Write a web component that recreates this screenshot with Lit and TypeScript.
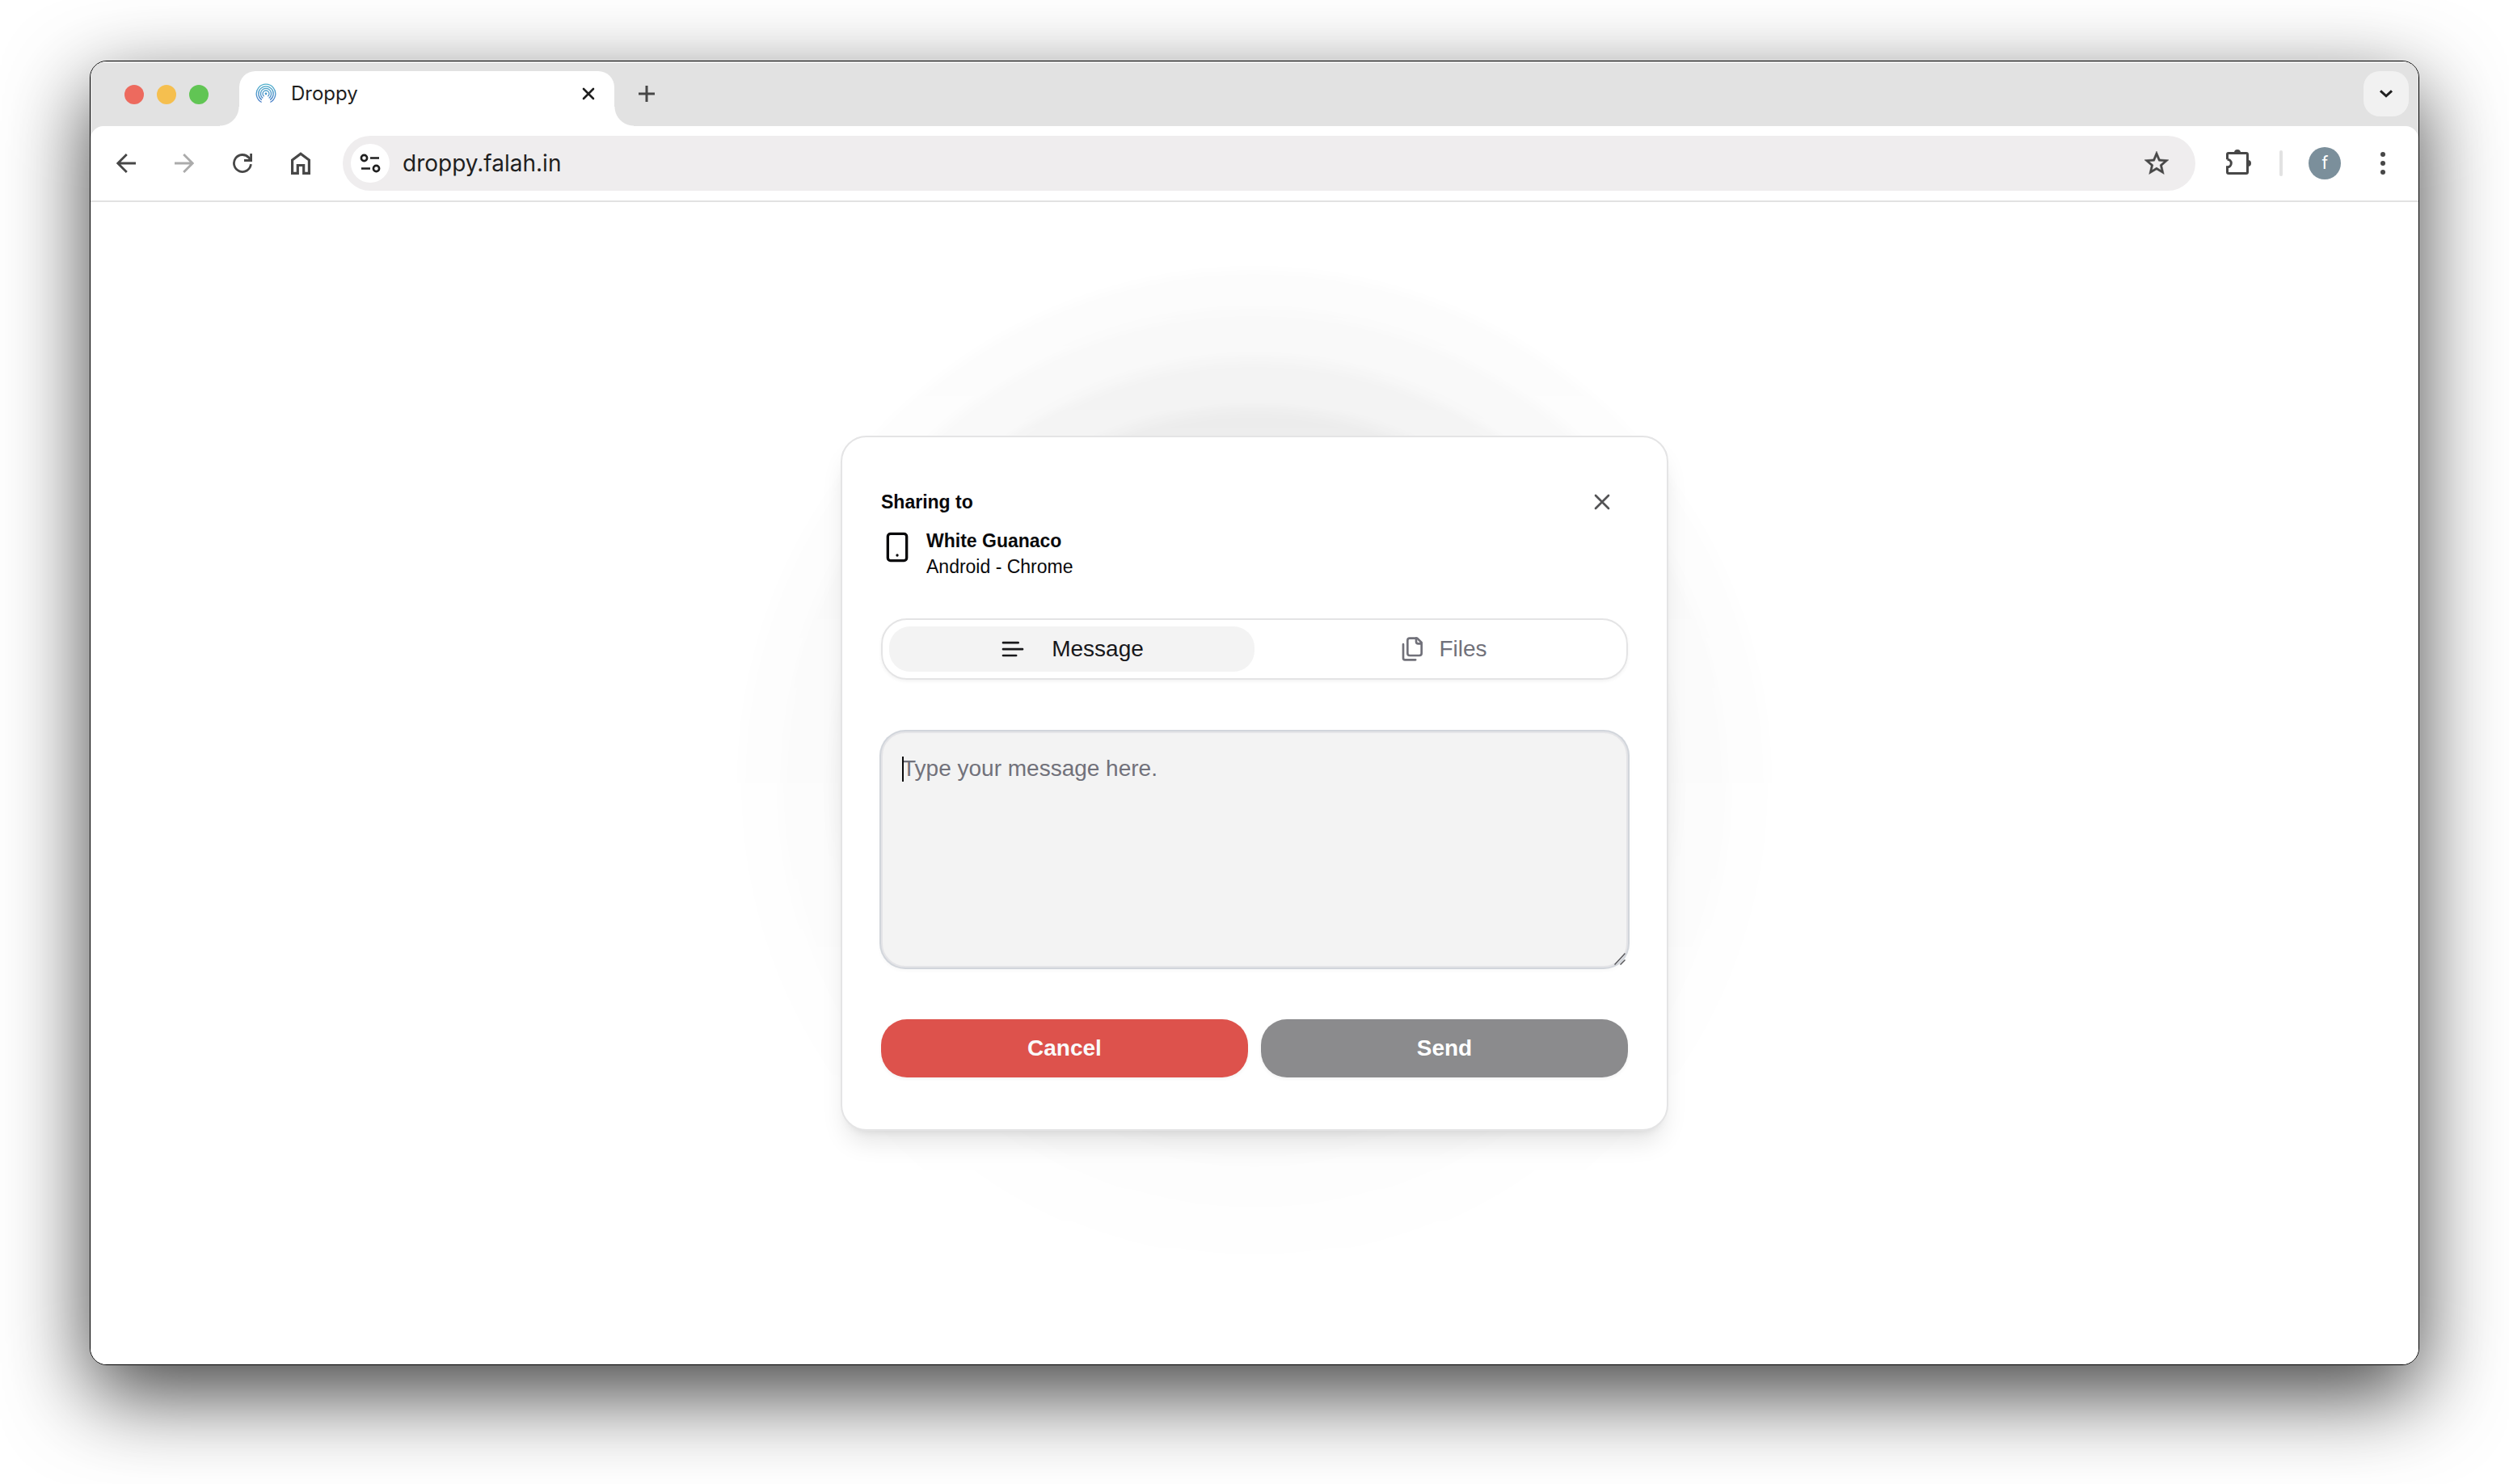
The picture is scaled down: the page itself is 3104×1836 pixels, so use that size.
import { LitElement, html, css, svg } from "lit";
import { customElement, state } from "lit/decorators.js";

const RIPPLES = [
  { size: 1270, alpha: 0.01 },
  { size: 1170, alpha: 0.015 },
  { size: 1050, alpha: 0.028 },
  { size: 930, alpha: 0.034 },
];

/** Open ring with a gap of 2 * gapDeg degrees at the bottom. */
function openRing(cx: number, cy: number, r: number, gapDeg: number) {
  const a = (gapDeg * Math.PI) / 180;
  const dx = r * Math.sin(a);
  const dy = r * Math.cos(a);
  return `M${(cx - dx).toFixed(2)} ${(cy + dy).toFixed(2)}A${r} ${r} 0 1 1 ${(cx + dx).toFixed(2)} ${(cy + dy).toFixed(2)}`;
}

@customElement("browser-tabs")
export class BrowserTabs extends LitElement {
  static styles = css`
    :host {
      display: flex;
      align-items: flex-start;
      height: 68px;
      padding: 12px 12px 0 42px;
      background: #e2e2e2;
      box-shadow: inset 0 2px #ededed;
      font-family: Inter, "Liberation Sans", sans-serif;
    }
    .lights {
      display: flex;
      gap: 16px;
      padding-top: 17px;
    }
    .light {
      width: 24px;
      height: 24px;
      padding: 0;
      border: 0;
      border-radius: 50%;
    }
    .close-window { background: #ed6a5e; }
    .minimise { background: #f5bf4f; }
    .zoom { background: #61c554; }
    .tab {
      position: relative;
      display: flex;
      align-items: center;
      box-sizing: border-box;
      width: 464px;
      height: 68px;
      margin-left: 38px;
      padding: 0 16px 12px 20px;
      border-radius: 20px 20px 0 0;
      background: #fff;
    }
    .tab::before,
    .tab::after {
      content: "";
      position: absolute;
      bottom: 0;
      width: 24px;
      height: 24px;
    }
    .tab::before {
      right: 100%;
      background: radial-gradient(circle at 0 0, transparent 23px, #fff 24px);
    }
    .tab::after {
      left: 100%;
      background: radial-gradient(circle at 100% 0, transparent 23px, #fff 24px);
    }
    .title {
      flex: 1;
      margin-left: 18px;
      font-size: 24px;
      line-height: 32px;
      color: #1f1f1f;
    }
    .icon-button {
      display: flex;
      align-items: center;
      justify-content: center;
      padding: 0;
      border: 0;
      background: none;
    }
    .tab-close {
      width: 32px;
      height: 32px;
    }
    .new-tab {
      width: 56px;
      height: 56px;
      margin-left: 12px;
    }
    .tab-search {
      width: 56px;
      height: 56px;
      margin-left: auto;
      border-radius: 20px;
      background: #f1f1f1;
    }
    svg { display: block; }
  `;

  render() {
    return html`
      <div class="lights">
        <button class="light close-window" aria-label="Close window"></button>
        <button class="light minimise" aria-label="Minimise"></button>
        <button class="light zoom" aria-label="Zoom"></button>
      </div>
      <div class="tab">
        <svg width="26" height="26" viewBox="0 0 26 26" fill="none" stroke="url(#sky)" stroke-width="1.3">
          <defs>
            <linearGradient id="sky" gradientUnits="userSpaceOnUse" x1="0" y1="0" x2="0" y2="26">
              <stop offset="0" stop-color="#4fb3cb" />
              <stop offset="1" stop-color="#4a78c8" />
            </linearGradient>
          </defs>
          ${[11.8, 9.2, 6.6, 4].map(
            (r) => svg`<path d=${openRing(13, 13, r, r > 10 ? 27 : 34)} />`
          )}
          <circle cx="13" cy="13" r="1.4" fill="#4e9bcb" stroke="none" />
        </svg>
        <span class="title">Droppy</span>
        <button class="icon-button tab-close" aria-label="Close tab">
          <svg width="16" height="16" viewBox="0 0 16 16" stroke="#1f1f1f" stroke-width="2.6" stroke-linecap="round">
            <path d="M2 2l12 12M14 2L2 14" />
          </svg>
        </button>
      </div>
      <button class="icon-button new-tab" aria-label="New tab">
        <svg width="20" height="20" viewBox="0 0 20 20" stroke="#474747" stroke-width="3">
          <path d="M10 0v20M0 10h20" />
        </svg>
      </button>
      <button class="icon-button tab-search" aria-label="Search tabs">
        <svg width="20" height="14" viewBox="0 0 20 14" fill="none" stroke="#1f1f1f" stroke-width="3">
          <path d="M3 3.3L10 9.8L17 3.3" />
        </svg>
      </button>
    `;
  }
}

@customElement("browser-toolbar")
export class BrowserToolbar extends LitElement {
  static styles = css`
    :host {
      display: flex;
      align-items: center;
      gap: 16px;
      padding: 12px 16px;
      border-bottom: 2px solid #e2e2e2;
      border-radius: 16px 16px 0 0;
      background: #fff;
      font-family: Inter, "Liberation Sans", sans-serif;
    }
    .tool {
      display: flex;
      align-items: center;
      justify-content: center;
      flex: none;
      width: 56px;
      height: 56px;
      padding: 0;
      border: 0;
      background: none;
      color: #474747;
    }
    .tool:disabled { color: #ababab; }
    .omnibox {
      display: flex;
      align-items: center;
      flex: 1;
      height: 68px;
      margin: 0 8px;
      padding: 0 20px 0 10px;
      border-radius: 34px;
      background: #efedee;
    }
    .site-info {
      width: 48px;
      height: 48px;
      border-radius: 50%;
      background: #fff;
      color: #1f1f1f;
    }
    .address {
      flex: 1;
      min-width: 0;
      height: 48px;
      margin: 0 16px;
      padding: 0;
      border: 0;
      outline: 0;
      background: none;
      color: #1f1f1f;
      font: 28px/48px Inter, "Liberation Sans", sans-serif;
    }
    .divider {
      width: 4px;
      height: 32px;
      margin: 0 16px 0 8px;
      border-radius: 2px;
      background: #e2e2e2;
    }
    .avatar {
      width: 40px;
      height: 40px;
      margin-right: 8px;
      padding: 0;
      border: 0;
      border-radius: 50%;
      background: #7b8f9b;
      color: #fff;
      font: 22px/40px Roboto, sans-serif;
    }
    svg { display: block; }
  `;

  render() {
    return html`
      <button class="tool" aria-label="Back">
        <svg width="24" height="24" viewBox="0 0 24 24" fill="none" stroke="currentColor" stroke-width="2.8">
          <path d="M24 12H2.5M12.8 1L1.8 12L12.8 23" />
        </svg>
      </button>
      <button class="tool" aria-label="Forward" disabled>
        <svg width="24" height="24" viewBox="0 0 24 24" fill="none" stroke="currentColor" stroke-width="2.8">
          <path d="M0 12H21.5M11.2 1L22.2 12L11.2 23" />
        </svg>
      </button>
      <button class="tool" aria-label="Reload">
        <svg width="26" height="26" viewBox="0 0 26 26" fill="none" stroke="currentColor" stroke-width="2.8">
          <path d="M23.4 14.2A10.5 10.5 0 1 1 20.8 6L23 8.5" />
          <path d="M23.6 1V9.5H15" />
        </svg>
      </button>
      <button class="tool" aria-label="Home">
        <svg width="24" height="28" viewBox="0 0 24 28" fill="none" stroke="currentColor" stroke-width="3.2">
          <path d="M1.6 10L12 2.2L22.4 10V26.4H15.7V16.5H8.3V26.4H1.6Z" />
        </svg>
      </button>
      <div class="omnibox">
        <button class="tool site-info" aria-label="View site information">
          <svg width="26" height="24" viewBox="0 0 26 24" fill="none" stroke="currentColor" stroke-width="2.6">
            <circle cx="5.5" cy="5.5" r="3.6" />
            <path d="M13 5.5h11M2 18.5h11" />
            <circle cx="20.5" cy="18.5" r="3.6" />
          </svg>
        </button>
        <input class="address" type="text" aria-label="Address" value="droppy.falah.in" />
        <button class="tool" aria-label="Bookmark this page">
          <svg width="36" height="36" viewBox="0 0 24 24" fill="currentColor" stroke="currentColor" stroke-width="0.3">
            <path d="M22 9.24l-7.19-.62L12 2 9.19 8.63 2 9.24l5.46 4.73L5.82 21 12 17.27 18.18 21l-1.63-7.03L22 9.24zM12 15.4l-3.76 2.27 1-4.28-3.32-2.88 4.38-.38L12 6.1l1.71 4.04 4.38.38-3.32 2.88 1 4.28L12 15.4z" />
          </svg>
        </button>
      </div>
      <button class="tool" aria-label="Extensions">
        <svg width="36" height="36" viewBox="0 0 36 36" fill="none" stroke="currentColor" stroke-width="3">
          <path d="M5.5 13.2V7A1.5 1.5 0 0 1 7 5.5H29A1.5 1.5 0 0 1 30.5 7V29A1.5 1.5 0 0 1 29 30.5H7A1.5 1.5 0 0 1 5.5 29V22.8A4.8 4.8 0 0 0 5.5 13.2" />
          <path d="M14 5a4 4 0 0 1 8 0zM31 14a4 4 0 0 1 0 8z" fill="currentColor" stroke="none" />
        </svg>
      </button>
      <span class="divider"></span>
      <button class="avatar" aria-label="Profile f">f</button>
      <button class="tool" aria-label="Menu">
        <svg width="6" height="28" viewBox="0 0 6 28" fill="currentColor">
          <circle cx="3" cy="3" r="3" /><circle cx="3" cy="14" r="3" /><circle cx="3" cy="25" r="3" />
        </svg>
      </button>
    `;
  }
}

@customElement("share-dialog")
export class ShareDialog extends LitElement {
  @state() private mode: "message" | "files" = "message";

  static styles = css`
    :host {
      display: flex;
      flex-direction: column;
      box-sizing: border-box;
      width: 1024px;
      max-width: 100%;
      padding: 48px 48px 64px;
      border: 2px solid #e4e4e5;
      border-radius: 32px;
      background: #fff;
      box-shadow: 0 20px 30px -6px rgba(0, 0, 0, 0.1), 0 8px 12px -8px rgba(0, 0, 0, 0.1);
      color: #09090b;
      font-family: "Liberation Sans", Arial, sans-serif;
    }
    .heading {
      display: flex;
      align-items: center;
      justify-content: space-between;
    }
    h2 {
      margin: 0;
      font-size: 23px;
      line-height: 32px;
    }
    .dismiss {
      display: flex;
      align-items: center;
      justify-content: center;
      width: 64px;
      height: 64px;
      padding: 0;
      border: 0;
      background: none;
      color: #535355;
    }
    .device {
      display: flex;
      gap: 16px;
      font-size: 23px;
      line-height: 32px;
    }
    .device svg { margin-top: 4px; }
    .device p { margin: 0; }
    .device .name { font-weight: 700; }
    .tabs {
      display: grid;
      grid-template-columns: 1fr 1fr;
      margin: 48px 0 64px;
      padding: 8px;
      border: 2px solid #e4e4e5;
      border-radius: 32px;
      box-shadow: 0 2px 4px rgba(0, 0, 0, 0.05);
    }
    .mode {
      display: flex;
      align-items: center;
      justify-content: center;
      height: 56px;
      padding: 0;
      border: 0;
      border-radius: 26px;
      background: none;
      color: #71717a;
      font: 28px/40px "Liberation Sans", Arial, sans-serif;
    }
    .mode[aria-selected="true"] {
      background: #f3f3f3;
      color: #18181b;
    }
    .mode svg { margin-right: 32px; }
    .mode svg.files { margin: 0 16px; }
    .editor {
      position: relative;
      display: grid;
    }
    .message {
      box-sizing: border-box;
      height: 292px;
      padding: 24px;
      border: 2px solid #e4e4e7;
      border-radius: 30px;
      outline: 0;
      background: #f3f3f3;
      box-shadow: 0 0 0 2px #d1d5db, 0 2px 4px 2px rgba(0, 0, 0, 0.03);
      color: #09090b;
      font: 28px/40px "Liberation Sans", Arial, sans-serif;
      resize: none;
    }
    .message::placeholder {
      color: #71717a;
      opacity: 1;
    }
    .caret {
      position: absolute;
      left: 26px;
      top: 31px;
      width: 2px;
      height: 31px;
      background: #09090b;
    }
    .grip {
      position: absolute;
      right: 3px;
      bottom: 3px;
    }
    .actions {
      display: grid;
      grid-template-columns: 1fr 1fr;
      gap: 16px;
      margin-top: 64px;
    }
    .action {
      height: 72px;
      padding: 0;
      border: 0;
      border-radius: 32px;
      color: #fafafa;
      font: 700 28px/40px "Liberation Sans", Arial, sans-serif;
      box-shadow: 0 2px 4px rgba(0, 0, 0, 0.05);
    }
    .cancel { background: #dd524c; }
    .send { background: #8b8b8d; color: #fff; }
    svg { display: block; flex: none; }
  `;

  render() {
    return html`
      <div class="heading">
        <h2>Sharing to</h2>
        <button class="dismiss" aria-label="Close">
          <svg width="32" height="32" viewBox="0 0 24 24" fill="none" stroke="currentColor" stroke-width="2" stroke-linecap="round">
            <path d="M18 6L6 18M6 6l12 12" />
          </svg>
        </button>
      </div>
      <div class="device">
        <svg width="40" height="40" viewBox="0 0 24 24" fill="none" stroke="currentColor" stroke-width="2" stroke-linecap="round">
          <rect x="5" y="2" width="14" height="20" rx="2" />
          <path d="M12 18h.01" />
        </svg>
        <div>
          <p class="name">White Guanaco</p>
          <p>Android - Chrome</p>
        </div>
      </div>
      <div class="tabs" role="tablist">
        <button class="mode" role="tab" aria-selected=${this.mode === "message"} @click=${() => (this.mode = "message")}>
          <svg width="32" height="32" viewBox="0 0 24 24" fill="none" stroke="currentColor" stroke-width="2" stroke-linecap="round">
            <path d="M17 6.1H3M21 12.1H3M15.1 18H3" />
          </svg>
          Message
        </button>
        <button class="mode" role="tab" aria-selected=${this.mode === "files"} @click=${() => (this.mode = "files")}>
          <svg class="files" width="32" height="32" viewBox="0 0 24 24" fill="none" stroke="currentColor" stroke-width="2" stroke-linecap="round" stroke-linejoin="round">
            <path d="M20 7h-3a2 2 0 0 1-2-2V2" />
            <path d="M9 18a2 2 0 0 1-2-2V4a2 2 0 0 1 2-2h7l4 4v10a2 2 0 0 1-2 2Z" />
            <path d="M3 7.6v12.8A1.6 1.6 0 0 0 4.6 22h9.8" />
          </svg>
          Files
        </button>
      </div>
      <div class="editor">
        <textarea class="message" aria-label="Message" placeholder="Type your message here."></textarea>
        <span class="caret"></span>
        <svg class="grip" width="14" height="15" viewBox="0 0 14 15" stroke="#58585c" stroke-width="1.5">
          <path d="M0.5 14.5L13.5 0.5M7.5 14.5L13.5 8.5" />
        </svg>
      </div>
      <div class="actions">
        <button class="action cancel">Cancel</button>
        <button class="action send">Send</button>
      </div>
    `;
  }
}

@customElement("app-root")
export class AppRoot extends LitElement {
  static styles = css`
    :host {
      display: flex;
      box-sizing: border-box;
      min-height: 100vh;
      padding: 75px 111px 147px;
      background: #fff;
    }
    .window {
      display: flex;
      flex-direction: column;
      flex: 1;
      min-width: 0;
      border: 1px solid #000;
      border-radius: 21px;
      background: #e2e2e2;
      box-shadow: 0 36px 104px rgba(0, 0, 0, 0.74);
      overflow: hidden;
    }
    .page {
      display: grid;
      flex: 1;
      background: #fff;
    }
    .ripples,
    .center {
      grid-area: 1 / 1;
      display: grid;
      place-items: center;
      min-width: 0;
    }
    .center {
      z-index: 1;
    }
    .ripples {
      overflow: hidden;
      -webkit-mask-image: linear-gradient(to bottom, #000, transparent);
      mask-image: linear-gradient(to bottom, #000, transparent);
    }
    .ripple {
      grid-area: 1 / 1;
      border-radius: 50%;
      background: #000;
      filter: blur(8px);
    }
  `;

  render() {
    return html`
      <main class="window">
        <browser-tabs></browser-tabs>
        <browser-toolbar></browser-toolbar>
        <div class="page">
          <div class="ripples">
            ${RIPPLES.map(
              (r) => html`<div class="ripple" style="width:${r.size}px;height:${r.size}px;opacity:${r.alpha}"></div>`
            )}
          </div>
          <div class="center"><share-dialog></share-dialog></div>
        </div>
      </main>
    `;
  }
}
